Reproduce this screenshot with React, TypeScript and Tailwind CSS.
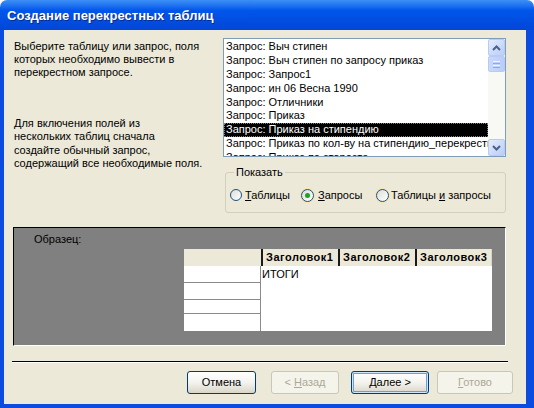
import React from "react";

const items = [
  "Запрос: Выч стипен",
  "Запрос: Выч стипен по запросу приказ",
  "Запрос: Запрос1",
  "Запрос: ин 06 Весна 1990",
  "Запрос: Отличники",
  "Запрос: Приказ",
  "Запрос: Приказ на стипендию",
  "Запрос: Приказ по кол-ву на стипендию_перекрестный",
  "Запрос: Приказ по старосте",
];

function ScrollButton({ dir }: { dir: "up" | "down" }) {
  return (
    <div className="flex h-[17px] w-[17px] items-center justify-center rounded-[2px] border border-[#b7cbf5] bg-gradient-to-br from-[#e3ecfe] to-[#b9cdf8]">
      <svg width="9" height="6" viewBox="0 0 9 6">
        <path
          d={dir === "up" ? "M1 5L4.5 1.5L8 5" : "M1 1L4.5 4.5L8 1"}
          stroke="#4d6185"
          strokeWidth="2"
          fill="none"
        />
      </svg>
    </div>
  );
}

function Radio({ checked, big }: { checked?: boolean; big?: boolean }) {
  return (
    <span
      className={
        big
          ? "flex h-[13px] w-[13px] shrink-0 items-center justify-center rounded-full border border-[#1c5180] bg-gradient-to-br from-[#dcdcd7] to-white shadow-[0_0_0_1px_#f9e3a7]"
          : "flex h-[12px] w-[12px] shrink-0 items-center justify-center rounded-full border border-[#1c5180] bg-gradient-to-br from-[#dcdcd7] to-white"
      }
    >
      {checked && <span className="h-[5px] w-[5px] rounded-full bg-[#21a121]" />}
    </span>
  );
}

function XpButton({
  children,
  width,
  disabled,
  isDefault,
}: {
  children: React.ReactNode;
  width: string;
  disabled?: boolean;
  isDefault?: boolean;
}) {
  if (disabled) {
    return (
      <div
        className={`${width} flex h-[23px] items-center justify-center rounded-[3px] border border-[#c9c7ba] bg-[#f5f4ea] text-[11px] text-[#aca899]`}
      >
        <span>{children}</span>
      </div>
    );
  }
  return (
    <div
      className={`${width} flex h-[23px] items-center justify-center rounded-[3px] border border-[#003c74] bg-gradient-to-b from-white via-[#f4f3ee] to-[#d9d5c9] text-[11px] text-black ${
        isDefault ? "shadow-[inset_0_0_0_1px_#cee7ff,inset_0_0_0_2px_#6f9ae8]" : ""
      }`}
    >
      <span>{children}</span>
    </div>
  );
}

export default function App() {
  return (
    <div className="flex h-[408px] w-[534px] flex-col bg-white font-['Liberation_Sans',Arial,sans-serif] text-[11px] leading-[13px] text-black">
      {/* Заголовок окна */}
      <div className="flex h-[30px] shrink-0 items-center rounded-t-[7px] bg-gradient-to-b from-[#3d8ff6] via-[#0056ea] via-[35%] to-[#0346d8] pl-[7px]">
        <span className="text-[13px] font-bold text-white [text-shadow:1px_1px_0_#0a2a8a]">
          Создание перекрестных таблиц
        </span>
      </div>

      {/* Тело диалога */}
      <div className="flex flex-1 flex-col border-b-4 border-l-4 border-r-[8px] border-[#0b4be0] bg-[#ece9d8]">
        <div className="flex pl-[10px] pt-[8px]">
          {/* Пояснения */}
          <div className="w-[209px] pt-[2px]">
            <p>
              Выберите таблицу или запрос, поля
              <br />
              которых необходимо вывести в
              <br />
              перекрестном запросе.
            </p>
            <p className="mt-[38px] leading-[13.4px]">
              Для включения полей из
              <br />
              нескольких таблиц сначала
              <br />
              создайте обычный запрос,
              <br />
              содержащий все необходимые поля.
            </p>
          </div>

          <div className="flex w-[283px] flex-col">
            {/* Список */}
            <div className="flex h-[119px] border border-[#7f9db9] bg-white">
              <div className="flex-1 overflow-hidden pt-[1px]">
                {items.map((it) => {
                  const sel = it === "Запрос: Приказ на стипендию";
                  return (
                    <div
                      key={it}
                      className={`h-[13.9px] whitespace-nowrap pl-[2px] leading-[13.9px] ${
                        sel ? "bg-black text-white outline-1 outline-dotted outline-offset-[-1px] outline-[#808080]" : ""
                      }`}
                    >
                      {it}
                    </div>
                  );
                })}
              </div>
              <div className="flex w-[17px] flex-col bg-[#f8f8f4]">
                <ScrollButton dir="up" />
                <div className="flex h-[16px] w-[17px] flex-col items-center justify-center gap-[1px] rounded-[2px] border border-[#b7cbf5] bg-gradient-to-r from-[#c9d8fc] to-[#b8cdf8]">
                  <span className="h-[1px] w-[7px] bg-[#eef3fe]" />
                  <span className="h-[1px] w-[7px] bg-[#8ca8e8]" />
                  <span className="h-[1px] w-[7px] bg-[#eef3fe]" />
                  <span className="h-[1px] w-[7px] bg-[#8ca8e8]" />
                </div>
                <div className="flex-1" />
                <ScrollButton dir="down" />
              </div>
            </div>

            {/* Показать */}
            <fieldset className="ml-[2px] mt-[9px] w-[281px] rounded-[3px] border border-[#d0d0bf] pb-[10px] pl-[4px] pt-[9px]">
              <legend className="ml-[4px] px-[2px]">Показать</legend>
              <div className="flex h-[14px] items-center">
                <div className="flex w-[71px] items-center gap-[3px]">
                  <Radio />
                  <span>
                    <u>Т</u>аблицы
                  </span>
                </div>
                <div className="flex w-[75px] items-center gap-[4px]">
                  <Radio big checked />
                  <span>
                    <u>З</u>апросы
                  </span>
                </div>
                <div className="flex items-center gap-[2px]">
                  <Radio big />
                  <span>
                    Таблицы <u>и</u> запросы
                  </span>
                </div>
              </div>
            </fieldset>
          </div>
        </div>

        {/* Образец */}
        <div className="ml-[9px] mt-[14px] h-[119px] w-[493px] border border-b-white border-l-black border-r-white border-t-black bg-[#808080] pl-[20px] pt-[5px]">
          <div>Образец:</div>
          <div className="ml-[150px] mt-[3px] w-[308px]">
            <div className="grid h-[17px] grid-cols-[77px_77px_77px_77px] bg-[#ece9d8] text-[11px] font-bold tracking-[0.5px]">
              <div />
              <div className="flex items-center border-l-2 border-[#1a1a1a] pl-[3px]">Заголовок1</div>
              <div className="flex items-center border-l-2 border-[#1a1a1a] pl-[3px]">Заголовок2</div>
              <div className="flex items-center border-l-2 border-r border-[#1a1a1a] border-r-[#d8d5c8] pl-[3px]">
                Заголовок3
              </div>
            </div>
            <div className="flex h-[65px]">
              <div className="flex w-[77px] flex-col border-r border-[#8a8a8a] bg-white">
                <div className="h-[16px]" />
                <div className="h-[17px] border-t border-[#8a8a8a]" />
                <div className="h-[14px] border-t border-[#8a8a8a]" />
                <div className="h-[17px] border-t border-[#8a8a8a]" />
              </div>
              <div className="flex-1 bg-white pl-[1px] pt-[2px]">ИТОГИ</div>
            </div>
          </div>
        </div>

        {/* Разделитель */}
        <div className="ml-[8px] mt-[15px] h-[2px] w-[496px] border-b border-t border-b-white border-t-black" />

        {/* Кнопки */}
        <div className="mt-[8px] flex justify-end pr-[13px]">
          <XpButton width="w-[69px]">Отмена</XpButton>
          <div className="ml-[15px]">
            <XpButton width="w-[68px]" disabled>
              &lt; <u>Н</u>азад
            </XpButton>
          </div>
          <div className="ml-[12px]">
            <XpButton width="w-[78px]" isDefault>
              <u>Д</u>алее &gt;
            </XpButton>
          </div>
          <div className="ml-[8px]">
            <XpButton width="w-[76px]" disabled>
              <u>Г</u>отово
            </XpButton>
          </div>
        </div>
      </div>
    </div>
  );
}
